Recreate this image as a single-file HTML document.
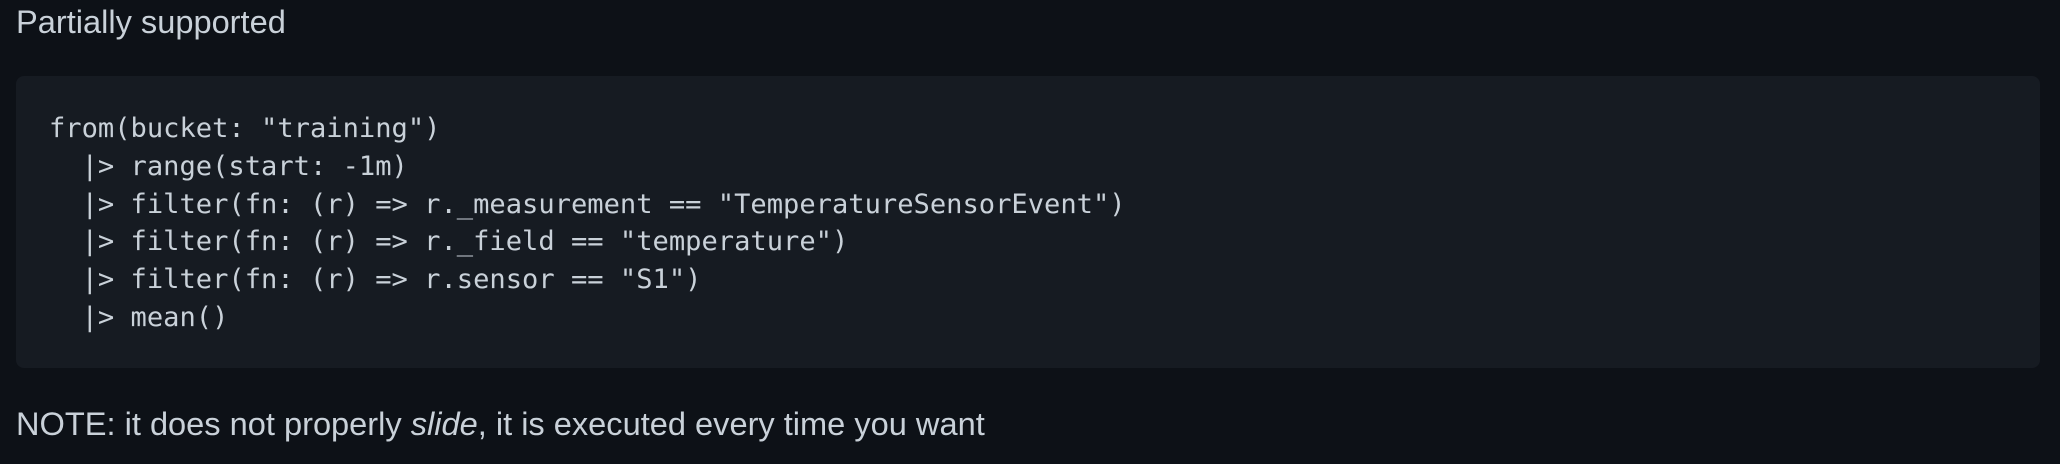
<!DOCTYPE html>
<html><head><style>
html,body{margin:0;padding:0;background:#0d1117;width:2060px;height:464px;overflow:hidden}
body{font-family:"Liberation Sans",sans-serif;color:#c9d1d9;position:relative}
.t{position:absolute;left:16px;font-size:32.6px;white-space:nowrap;line-height:1}
pre{position:absolute;left:16px;top:76px;width:2024px;height:292px;margin:0;background:#161b22;border-radius:8px;box-sizing:border-box;font-family:"DejaVu Sans Mono","Liberation Mono",monospace;font-size:27.1px;line-height:37.8px;color:#c9d1d9}
pre span{position:absolute;top:34px;left:33px}
</style></head><body>
<div class="t" style="top:6px">Partially supported</div>
<pre><span>from(bucket: "training")
  |&gt; range(start: -1m)
  |&gt; filter(fn: (r) =&gt; r._measurement == "TemperatureSensorEvent")
  |&gt; filter(fn: (r) =&gt; r._field == "temperature")
  |&gt; filter(fn: (r) =&gt; r.sensor == "S1")
  |&gt; mean()</span></pre>
<div class="t" style="top:408px">NOTE: it does not properly <i>slide</i>, it is executed every time you want</div>
</body></html>
